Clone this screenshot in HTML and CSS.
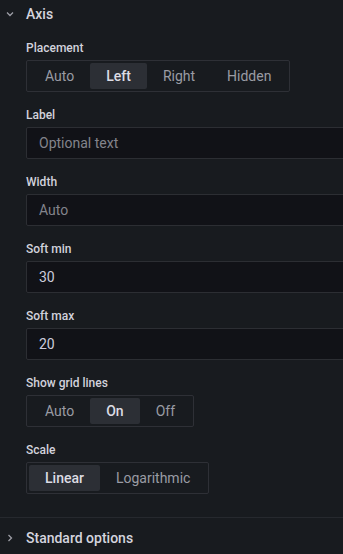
FILE: index.html
```html
<!DOCTYPE html>
<html>
<head>
<meta charset="utf-8">
<link rel="stylesheet" href="styles.css">
</head>
<body>
<div class="page">
  <div class="section">
    <div class="section-header">
      <svg class="chevron" width="8" height="6" viewBox="0 0 8 6"><path d="M1 1.5 L4 4.5 L7 1.5" fill="none" stroke="currentColor" stroke-width="1.3"/></svg>
      <span class="section-title">Axis</span>
    </div>
    <div class="section-body">
      <div class="field">
        <div class="field-label">Placement</div>
        <div class="radio-group">
          <span class="radio">Auto</span>
          <span class="radio active">Left</span>
          <span class="radio">Right</span>
          <span class="radio">Hidden</span>
        </div>
      </div>
      <div class="field">
        <div class="field-label">Label</div>
        <div class="input"><span class="placeholder">Optional text</span></div>
      </div>
      <div class="field">
        <div class="field-label">Width</div>
        <div class="input"><span class="placeholder">Auto</span></div>
      </div>
      <div class="field">
        <div class="field-label">Soft min</div>
        <div class="input"><span class="value">30</span></div>
      </div>
      <div class="field">
        <div class="field-label">Soft max</div>
        <div class="input"><span class="value">20</span></div>
      </div>
      <div class="field">
        <div class="field-label">Show grid lines</div>
        <div class="radio-group">
          <span class="radio">Auto</span>
          <span class="radio active">On</span>
          <span class="radio">Off</span>
        </div>
      </div>
      <div class="field">
        <div class="field-label">Scale</div>
        <div class="radio-group">
          <span class="radio active">Linear</span>
          <span class="radio">Logarithmic</span>
        </div>
      </div>
    </div>
  </div>
  <div class="section section-bordered">
    <div class="section-header tall">
      <svg class="chevron" width="8" height="8" viewBox="0 0 8 8"><path d="M2.5 1 L5.5 4 L2.5 7" fill="none" stroke="currentColor" stroke-width="1.3"/></svg>
      <span class="section-title">Standard options</span>
    </div>
  </div>
</div>
</body>
</html>
```

FILE: styles.css
```css
html, body {
  margin: 0;
  padding: 0;
  background: #181b1f;
  overflow: hidden;
}
body {
  font-family: Roboto, "Noto Sans", sans-serif;
  color: #ccccdc;
}
.page {
  width: 343px;
  overflow: hidden;
}
.section-header {
  display: flex;
  align-items: center;
  height: 28px;
}
.section-header.tall {
  height: 40px;
}
.chevron {
  color: #9d9ea6;
  width: 20px;
  margin-left: 0;
  margin-right: 6px;
  flex: none;
}
.section-title {
  font-size: 14px;
  font-weight: 500;
  color: #d4d4de;
}
.section-body {
  padding: 11px 0 9px 26px;
}
.field {
  margin-bottom: 14px;
}
.field-label {
  font-size: 12px;
  font-weight: 500;
  line-height: 18px;
  margin-bottom: 3px;
  color: #d2d2dc;
}
.radio-group {
  display: inline-flex;
  border: 1px solid #2e3036;
  border-radius: 2px;
  padding: 2px;
  height: 26px;
}
.radio {
  display: flex;
  align-items: center;
  height: 26px;
  padding: 0 16px;
  font-size: 14px;
  color: #9a9ba4;
  border-radius: 2px;
}
.radio.active {
  background: #2c2f35;
  color: #dcdce4;
  font-weight: 500;
}
.input {
  display: flex;
  align-items: center;
  box-sizing: border-box;
  height: 32px;
  width: 340px;
  background: #111217;
  border: 1px solid #2c2e33;
  border-radius: 2px;
  padding: 0 12px;
  font-size: 14px;
}
.placeholder {
  color: #83848c;
}
.value {
  color: #ccccdc;
}
.section-bordered {
  border-top: 1px solid #26292e;
}
```
